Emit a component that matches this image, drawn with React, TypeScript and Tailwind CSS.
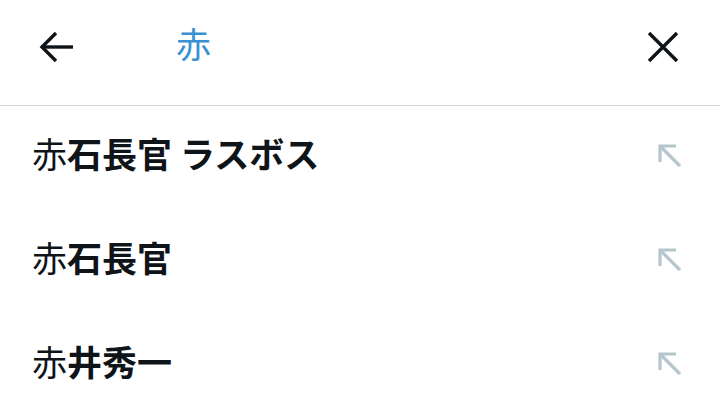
const rows = [
  { rest: '石長官 ラスボス' },
  { rest: '石長官' },
  { rest: '井秀一' },
];

function BackIcon() {
  return (
    <svg width="36" height="34" viewBox="0 0 36 34" fill="none" stroke="#0f1419" strokeWidth="3.4">
      <path d="M3 17h31" />
      <path d="M17 3 3 17l14 14" />
    </svg>
  );
}

function CloseIcon() {
  return (
    <svg width="32" height="32" viewBox="0 0 32 32" fill="none" stroke="#0f1419" strokeWidth="3.4">
      <path d="M2 2l28 28M30 2 2 30" />
    </svg>
  );
}

function FillIcon() {
  return (
    <svg width="26" height="26" viewBox="0 0 26 26" fill="none" stroke="#b4c6cd" strokeWidth="3.2">
      <path d="M3 19V3h16" />
      <path d="M3 3l20 20" />
    </svg>
  );
}

export default function App() {
  return (
    <div className="w-[720px] h-[415px] bg-white overflow-hidden" style={{ fontFamily: '"Noto Sans CJK JP", "Noto Sans", sans-serif' }}>
      <div className="h-[106px] flex items-center pb-[12px] border-b border-[#cfd9de]">
        <div className="pl-[39px] w-[176px] flex items-center">
          <BackIcon />
        </div>
        <div className="flex-1 text-[35px] text-[#3a90d2] leading-none pb-[8px]">赤</div>
        <div className="pr-[41px] flex items-center">
          <CloseIcon />
        </div>
      </div>
      {rows.map((r, i) => (
        <div key={i} className="h-[104px] flex items-center justify-between pl-[32px] pr-[37px]">
          <div className="text-[35px] text-[#0f1419] leading-none pb-[12px]">
            <span className="font-normal">赤</span>
            <span className="font-bold">{r.rest}</span>
          </div>
          <div className="pb-[4px]">
            <FillIcon />
          </div>
        </div>
      ))}
    </div>
  );
}
